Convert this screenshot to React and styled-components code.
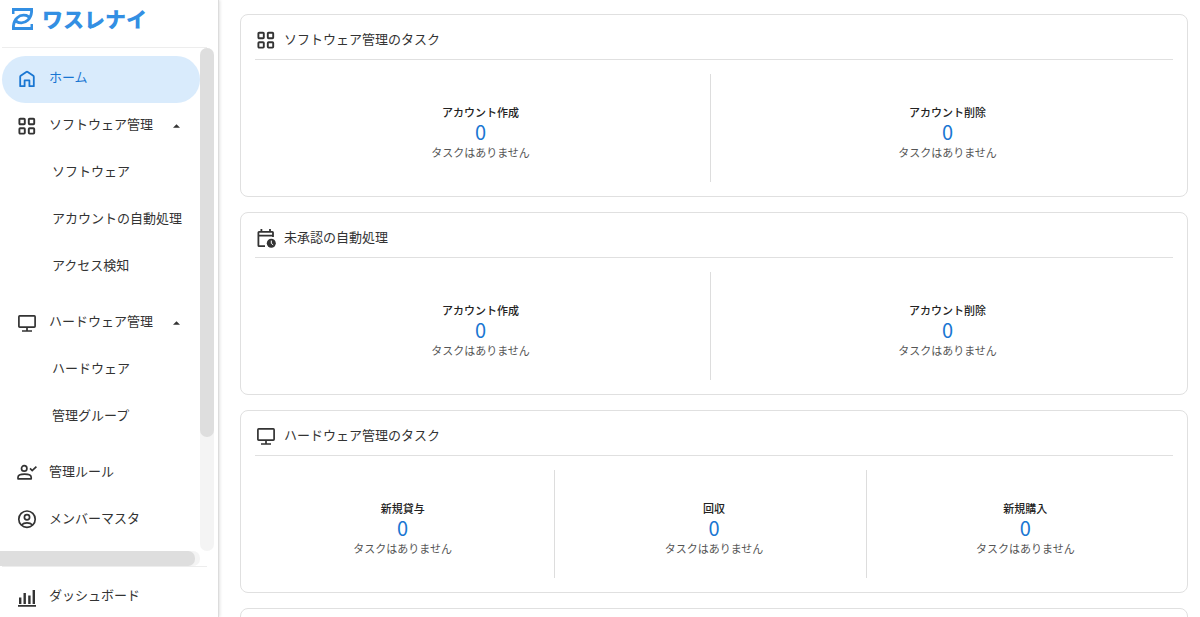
import styled, { createGlobalStyle } from "styled-components";

const GlobalStyle = createGlobalStyle`
  * {
    box-sizing: border-box;
  }
  body {
    margin: 0;
    background: #fff;
    color: #333;
    font-family: "Noto Sans CJK JP", "Noto Sans", sans-serif;
    font-size: 13px;
  }
`;

const Page = styled.div`
  display: flex;
  height: 100vh;
  overflow: hidden;
`;

const Sidebar = styled.aside`
  flex: none;
  width: 219px;
  height: 100vh;
  overflow: hidden;
  border-right: 1px solid #dcdcdc;
  box-shadow: 1px 0 3px rgba(0, 0, 0, 0.12);
`;

const Brand = styled.a`
  display: flex;
  align-items: center;
  gap: 8px;
  height: 47px;
  padding: 0 0 10px 11px;
  color: #338fe3;
  font-size: 21px;
  font-weight: 900;
  line-height: 24px;
  text-decoration: none;
  span {
    padding-bottom: 2px;
  }
`;

const Divider = styled.hr`
  height: 1px;
  margin: 0 11px 0 2px;
  border: 0;
  background: #ededed;
`;

const ScrollArea = styled.div`
  display: grid;
  grid-template-columns: 200px 14px;
  grid-template-rows: calc(100vh - 114px) 15px;
`;

const Nav = styled.nav`
  overflow: hidden;
  padding: 8px 0 0 2px;
`;

const Track = styled.div`
  background: #f4f4f4;
  border-radius: 7px;
`;

const VThumb = styled.div`
  height: calc(100% - 114px);
  background: #dedede;
  border-radius: 7px;
`;

const HThumb = styled.div`
  width: 195px;
  height: 15px;
  background: #dedede;
  border-radius: 0 7px 7px 0;
`;

const List = styled.ul`
  margin: 0;
  padding: 0;
  list-style: none;
`;

const SubList = styled(List)`
  padding-bottom: 9px;
`;

const NavLink = styled.a`
  display: flex;
  align-items: center;
  gap: 12px;
  height: 47px;
  padding: 0 16px 1px ${(props) => (props.$sub ? "50px" : "15px")};
  border-radius: 24px;
  background: ${(props) => (props.$active ? "#d9ebfc" : "transparent")};
  color: ${(props) => (props.$active ? "#1976d2" : "#333")};
  line-height: 20px;
  text-decoration: none;
  white-space: nowrap;
  svg {
    flex: none;
  }
`;

const NavToggle = styled.button`
  display: flex;
  align-items: center;
  gap: 12px;
  width: 100%;
  height: 47px;
  padding: 0 20px 1px 15px;
  border: 0;
  background: transparent;
  color: #333;
  font: inherit;
  line-height: 20px;
  text-align: left;
  white-space: nowrap;
  cursor: pointer;
  .caret {
    margin-left: auto;
  }
`;

const Label = styled.span`
  padding-bottom: 4px;
`;

const Footer = styled.div`
  padding: 7px 0 0 2px;
`;

const Main = styled.main`
  flex: 1;
  min-width: 0;
  display: flex;
  flex-direction: column;
  gap: 15px;
  padding: 14px 12px 0 21px;
`;

const Card = styled.section`
  flex: none;
  min-height: 183px;
  border: 1px solid #e0e0e0;
  border-radius: 8px;
`;

const CardHeader = styled.header`
  display: flex;
  align-items: center;
  gap: 8px;
  height: 45px;
  margin: 0 14px;
  padding: 6px 0 0 1px;
  border-bottom: 1px solid #e0e0e0;
`;

const CardTitle = styled.h2`
  margin: 0 0 2px;
  font-size: 13px;
  font-weight: 400;
  line-height: 20px;
`;

const Tasks = styled.div`
  display: flex;
  padding: 14px 6px;
`;

const Task = styled.div`
  flex: 1;
  height: 108px;
  margin-right: 3px;
  padding: 30px 0 0 4px;
  border-right: 1px solid #ddd;
  text-align: center;
  &:last-child {
    border-color: transparent;
  }
`;

const TaskName = styled.h3`
  margin: 0;
  color: #222;
  font-size: 11px;
  font-weight: 500;
  line-height: 16px;
`;

const Count = styled.a`
  display: block;
  color: #1976d2;
  font-size: 20px;
  line-height: 24px;
  text-decoration: none;
`;

const Note = styled.p`
  margin: 0;
  color: #555;
  font-size: 11px;
  line-height: 16px;
`;

const LogoMark = () => (
  <svg width="23" height="22" viewBox="0 0 23 22" fill="none">
    <path d="M1 0H22V4H19.5V3H3.5V6H1Z" fill="currentColor" />
    <path d="M22 22H1V18H3.5V19H19.5V16H22Z" fill="currentColor" />
    <path
      d="M2.4 20V18C3 11 8 7.2 12.5 7.2C16.4 7.2 18.4 9 18.4 11.3M20.6 2V4C20 11 15 14.8 10.5 14.8C6.6 14.8 4.6 13 4.6 10.7"
      stroke="currentColor"
      strokeWidth="2.8"
    />
  </svg>
);

const HomeIcon = () => (
  <svg width="20" height="20" viewBox="0 0 20 20" fill="none">
    <path
      d="M3.2 17.2V7.8Q3.2 7.2 3.7 6.8L9.3 2.9Q10 2.4 10.7 2.9L16.3 6.8Q16.8 7.2 16.8 7.8V17.2H12.4V11.4H7.6V17.2Z"
      stroke="currentColor"
      strokeWidth="1.8"
      strokeLinejoin="round"
    />
  </svg>
);

const GridIcon = () => (
  <svg width="20" height="20" viewBox="0 0 20 20" fill="none">
    <g stroke="currentColor" strokeWidth="1.9">
      <rect x="2.4" y="2.8" width="5.4" height="5.4" rx="0.8" />
      <rect x="11.8" y="2.8" width="5.4" height="5.4" rx="0.8" />
      <rect x="2.4" y="12.2" width="5.4" height="5.4" rx="0.8" />
      <rect x="11.8" y="12.2" width="5.4" height="5.4" rx="0.8" />
    </g>
  </svg>
);

const MonitorIcon = () => (
  <svg width="20" height="20" viewBox="0 0 20 20" fill="none">
    <g stroke="currentColor" strokeWidth="1.7">
      <rect x="1.9" y="2.9" width="16.2" height="11.2" rx="0.8" />
      <path d="M10 14V17.6M5 18H15" />
    </g>
  </svg>
);

const PersonCheckIcon = () => (
  <svg width="20" height="20" viewBox="0 0 20 20" fill="none">
    <g stroke="currentColor" strokeWidth="1.7">
      <circle cx="7.2" cy="5.4" r="2.7" />
      <path
        d="M1 15.8V14.2C1 12 4.5 11.2 7.6 11.2S14.2 12 14.2 14.2V15.8Z"
        strokeLinejoin="round"
      />
      <path d="M13 5.4L15.2 7.6L19.4 3.6" />
    </g>
  </svg>
);

const AccountIcon = () => (
  <svg width="20" height="20" viewBox="0 0 20 20" fill="none">
    <g stroke="currentColor" strokeWidth="1.7">
      <circle cx="10" cy="9.2" r="8.2" />
      <circle cx="10" cy="7.2" r="2.6" />
      <path d="M4.4 15C7.4 12.1 12.6 12.1 15.6 15" />
    </g>
  </svg>
);

const BarsIcon = () => (
  <svg width="20" height="20" viewBox="0 0 20 20" fill="currentColor">
    <path d="M2 10.5h2.4V17H2zM6.5 6h2.4v11H6.5zM11.2 8.5h2.4V17h-2.4zM15.6 3H18v14h-2.4zM1 18h18v1.7H1z" />
  </svg>
);

const CalendarClockIcon = () => (
  <svg width="20" height="20" viewBox="0 0 20 20" fill="none">
    <path
      d="M9 18.1H3Q2.4 18.1 2.4 17.5V4.4Q2.4 3.8 3 3.8H16.4Q17 3.8 17 4.4V9M2.4 7.6H17M5.4 1V4M14 1V4"
      stroke="currentColor"
      strokeWidth="1.8"
    />
    <circle cx="15.3" cy="15.2" r="4.5" fill="currentColor" />
    <path d="M15.3 12.6V15.4L17.2 16.9" stroke="#fff" strokeWidth="1" />
  </svg>
);

const Caret = () => (
  <svg className="caret" width="7" height="4" viewBox="0 0 8 4">
    <path d="M0 4L4 0L8 4Z" fill="currentColor" />
  </svg>
);

const accounts = ["アカウント作成", "アカウント削除"];

const cards = [
  {
    title: "ソフトウェア管理のタスク",
    icon: <GridIcon />,
    tasks: accounts,
  },
  {
    title: "未承認の自動処理",
    icon: <CalendarClockIcon />,
    tasks: accounts,
  },
  {
    title: "ハードウェア管理のタスク",
    icon: <MonitorIcon />,
    tasks: ["新規貸与", "回収", "新規購入"],
  },
];

const NavGroup = ({ icon, label, items }) => (
  <li>
    <NavToggle type="button" aria-expanded="true">
      {icon}
      <Label>{label}</Label>
      <Caret />
    </NavToggle>
    <SubList>
      {items.map((item) => (
        <li key={item}>
          <NavLink href="#" $sub>
            <Label>{item}</Label>
          </NavLink>
        </li>
      ))}
    </SubList>
  </li>
);

const App = () => {
  return (
    <Page>
      <GlobalStyle />
      <Sidebar>
        <Brand href="#">
          <LogoMark />
          <span>ワスレナイ</span>
        </Brand>
        <Divider />
        <ScrollArea>
          <Nav>
            <List>
              <li>
                <NavLink href="#" $active>
                  <HomeIcon />
                  <Label>ホーム</Label>
                </NavLink>
              </li>
              <NavGroup
                icon={<GridIcon />}
                label="ソフトウェア管理"
                items={["ソフトウェア", "アカウントの自動処理", "アクセス検知"]}
              />
              <NavGroup
                icon={<MonitorIcon />}
                label="ハードウェア管理"
                items={["ハードウェア", "管理グループ"]}
              />
              <li>
                <NavLink href="#">
                  <PersonCheckIcon />
                  <Label>管理ルール</Label>
                </NavLink>
              </li>
              <li>
                <NavLink href="#">
                  <AccountIcon />
                  <Label>メンバーマスタ</Label>
                </NavLink>
              </li>
            </List>
          </Nav>
          <Track>
            <VThumb />
          </Track>
          <Track>
            <HThumb />
          </Track>
        </ScrollArea>
        <Divider />
        <Footer>
          <NavLink href="#">
            <BarsIcon />
            <Label>ダッシュボード</Label>
          </NavLink>
        </Footer>
      </Sidebar>
      <Main>
        {cards.map((card) => (
          <Card key={card.title}>
            <CardHeader>
              {card.icon}
              <CardTitle>{card.title}</CardTitle>
            </CardHeader>
            <Tasks>
              {card.tasks.map((task) => (
                <Task key={task}>
                  <TaskName>{task}</TaskName>
                  <Count href="#">0</Count>
                  <Note>タスクはありません</Note>
                </Task>
              ))}
            </Tasks>
          </Card>
        ))}
        <Card />
      </Main>
    </Page>
  );
};
export default App;
